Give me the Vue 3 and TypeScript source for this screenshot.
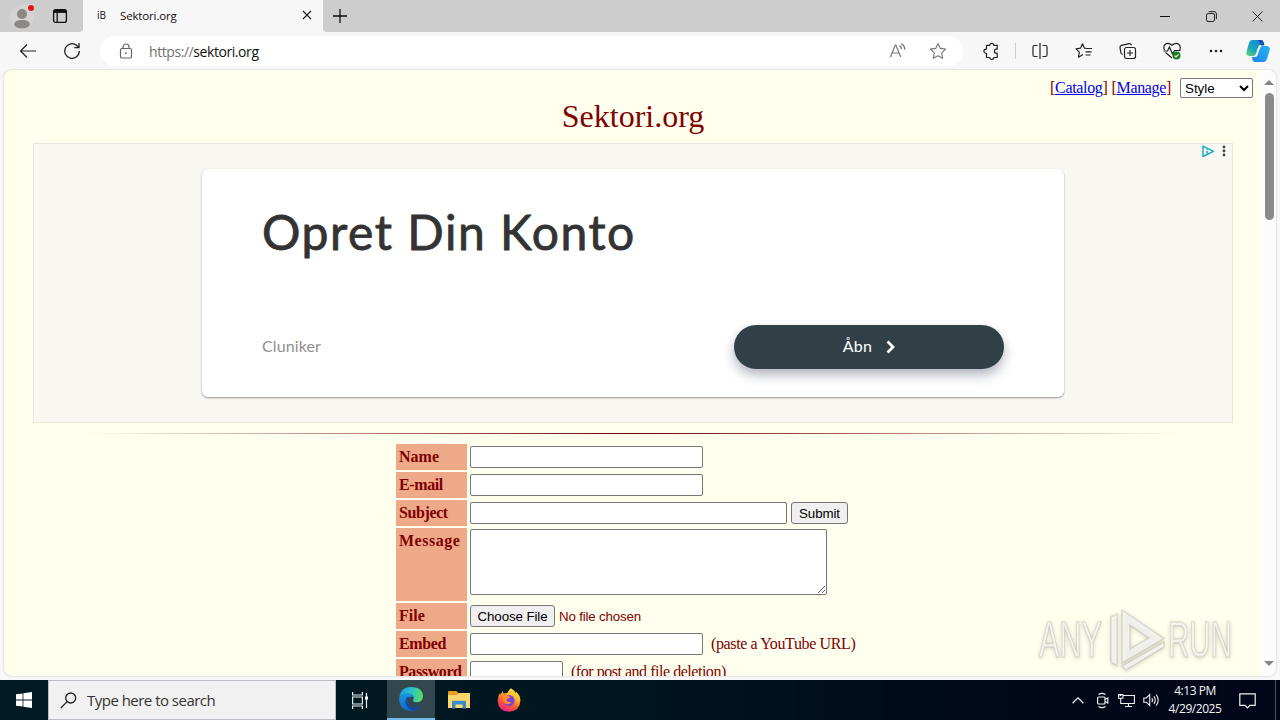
<script setup lang="ts">
import { ref } from 'vue'

interface Field {
  label: string
  kind: 'text' | 'subject' | 'message' | 'file' | 'password'
  hint?: string
}

const style = ref('Style')

const fields: Field[] = [
  { label: 'Name', kind: 'text' },
  { label: 'E-mail', kind: 'text' },
  { label: 'Subject', kind: 'subject' },
  { label: 'Message', kind: 'message' },
  { label: 'File', kind: 'file' },
  { label: 'Embed', kind: 'text', hint: '(paste a YouTube URL)' },
  { label: 'Password', kind: 'password', hint: '(for post and file deletion)' },
]
</script>

<template>
  <div class="desktop">
    <header class="titlebar">
      <div class="title-left">
        <svg class="avatar" width="24" height="28" viewBox="0 0 24 28">
          <circle cx="12" cy="15" r="12" fill="#d6d4d3" />
          <circle cx="12" cy="12" r="5" fill="#8b8886" />
          <path d="M4 23q0-5 8-5t8 5q-3 3.500-8 3.500t-8-3.500z" fill="#8b8886" />
          <circle cx="21" cy="6" r="4" fill="#d8d8d8" />
          <circle cx="21" cy="6" r="3" fill="#e0141c" />
        </svg>
        <svg class="workspace" width="16" height="16" viewBox="0 0 16 16" fill="none" stroke="#111" stroke-width="1.3">
          <rect x="1.6" y="1.6" width="12.8" height="12.8" rx="2" />
          <path d="M2 3.4h12" stroke-width="3" />
          <path d="M5.2 4v10.4" />
        </svg>
      </div>
      <div class="tab">
        <span class="favicon">iB</span>
        <span class="tab-title">Sektori.org</span>
        <svg width="10" height="10" viewBox="0 0 10 10" stroke="#222" stroke-width="1.2"><path d="M1 1l8 8M9 1L1 9" /></svg>
      </div>
      <div class="new-tab">
        <svg width="14" height="14" viewBox="0 0 14 14" stroke="#111" stroke-width="1.3"><path d="M7 0v14M0 7h14" /></svg>
      </div>
      <div class="win-controls">
        <span><svg width="10" height="10" viewBox="0 0 10 10"><path d="M0 5.5h10" stroke="#111" /></svg></span>
        <span>
          <svg width="11" height="11" viewBox="0 0 11 11" fill="none" stroke="#222">
            <rect x=".5" y="2.5" width="8" height="8" rx="1.6" />
            <path d="M2.8.6h5.2q2.4 0 2.4 2.4v5" />
          </svg>
        </span>
        <span><svg width="11" height="11" viewBox="0 0 11 11" stroke="#222"><path d="M.5.5l10 10M10.500.5l-10 10" /></svg></span>
      </div>
    </header>

    <nav class="toolbar">
      <div class="nav-buttons">
        <svg width="18" height="16" viewBox="0 0 18 16" fill="none" stroke="#222" stroke-width="1.2"><path d="M17 8H1.500M8 1.500L1.500 8 8 14.500" /></svg>
        <svg width="18" height="18" viewBox="0 0 18 18" fill="none" stroke="#222" stroke-width="1.3"><path d="M16.300 9A7.300 7.300 0 1 1 13.800 3.500L15.900 5.500M16 1v4.700h-4.600" /></svg>
      </div>
      <div class="address">
        <svg class="lock" width="14" height="16" viewBox="0 0 14 16" fill="none" stroke="#666" stroke-width="1.200">
          <rect x="1.500" y="5.500" width="11" height="9.500" rx="1.600" />
          <path d="M4 5.500V4a3 3 0 0 1 6 0v1.500" />
          <circle cx="7" cy="10.200" r=".9" fill="#666" stroke="none" />
        </svg>
        <span class="url"><i>https://</i>sektori.org</span>
        <svg class="read" width="18" height="16" viewBox="0 0 18 16" fill="none" stroke="#777" stroke-width="1.200">
          <path d="M1.500 14L6.300 2h.6l4.800 12M3.300 10h6.600" />
          <path d="M10.500 2.600q2 1 2 3.600M12.300.6q3.500 1.900 3.500 6.200" />
        </svg>
        <svg class="star" width="18" height="18" viewBox="0 0 18 18" fill="none" stroke="#777" stroke-width="1.100"><path d="M9 1.400l2.300 5 5.300.7-3.900 3.800.9 5.400L9 13.700l-4.600 2.600.9-5.400L1.400 7.100l5.300-.7z" stroke-linejoin="round" /></svg>
      </div>
      <div class="cell puzzle">
        <svg width="18" height="18" viewBox="0 0 18 18" fill="none" stroke="#222" stroke-width="1.200"><path d="M4.500 3.300h3.300a2 2 0 0 1 4 0h3.400v3.900h-.8a2 2 0 0 0 0 4h.8v4.300h-3.400a2 2 0 0 1-4 0H4.500v-4.200H4a2.100 2.100 0 0 1 0-4.200h.5z" stroke-linejoin="round" /></svg>
      </div>
      <div class="divider"></div>
      <div class="cell">
        <svg width="18" height="18" viewBox="0 0 18 18" fill="none" stroke="#222" stroke-width="1.200"><path d="M6.500 3.500h-3q-1.500 0-1.500 1.500v8q0 1.500 1.500 1.500h3M11.500 3.500h3q1.500 0 1.500 1.500v8q0 1.500-1.500 1.500h-3M9 1v16" /></svg>
      </div>
      <div class="cell">
        <svg width="18" height="18" viewBox="0 0 18 18" fill="none" stroke="#222" stroke-width="1.200"><path d="M12 6.500L9.500 6.200 7.500 1.800l-2 4.400-4.500.6 3.300 3.300-.8 5.100 4.500-2.600M10 6.500h7M10.500 9.800h6M10.500 13h5" stroke-linejoin="round" /></svg>
      </div>
      <div class="cell">
        <svg width="18" height="18" viewBox="0 0 18 18" fill="none" stroke="#222" stroke-width="1.200"><rect x="5.500" y="5.500" width="11" height="11" rx="2" /><path d="M11 8v6M8 11h6M3.600 12.500Q2 12 1.700 10L1 5.500Q.8 3.700 2.500 3.300l7.500-1.700q1.800-.3 2.500 1.700" /></svg>
      </div>
      <div class="cell">
        <svg width="20" height="20" viewBox="0 0 20 20" fill="none" stroke="#222" stroke-width="1.200">
          <path d="M2.500 9Q1 5.500 3 3.500q3.300-2.800 7 .8 3.700-3.600 7-.8 2 2.100.8 5.500M3.500 11.500L10 17M1.500 10h4l2-4 3 7 2-3.500h6" />
          <circle cx="14.500" cy="14.500" r="4" fill="#16801c" stroke="none" />
          <path d="M12.600 14.600l1.400 1.300 2.500-2.600" stroke="#fff" />
        </svg>
      </div>
      <div class="cell">
        <svg width="16" height="4" viewBox="0 0 16 4" fill="#222"><circle cx="3" cy="2" r="1.300" /><circle cx="8" cy="2" r="1.300" /><circle cx="13" cy="2" r="1.300" /></svg>
      </div>
      <div class="copilot">
        <svg width="26" height="24" viewBox="0 0 26 24">
          <defs>
            <linearGradient id="cpA" x1="0" y1="1" x2=".7" y2="0"><stop offset="0" stop-color="#65d568" /><stop offset=".45" stop-color="#18a8b8" /><stop offset="1" stop-color="#1688d8" /></linearGradient>
            <linearGradient id="cpB" x1="0" y1="1" x2="1" y2="0"><stop offset="0" stop-color="#2380f5" /><stop offset="1" stop-color="#22b6ee" /></linearGradient>
          </defs>
          <path d="M7 1h9q2 0 2.500 2l.8 3h-3.500q-2 0-2.700 2l-2.300 7q-.7 2-2.800 2H4.500Q.6 17 1.600 12.500L4 4q.8-3 3-3z" fill="url(#cpA)" />
          <path d="M19 23h-9q-2 0-2.500-2L7 18h3q2 0 2.700-2L15 9q.7-2 2.800-2h3.500q4.400 0 3.300 4.500L22 20q-.8 3-3 3z" fill="url(#cpB)" />
          <path d="M16 1q2 0 2.500 2l.8 3.500H16L13 1z" fill="#174fae" />
        </svg>
      </div>
    </nav>

    <div class="viewport">
      <main class="page">
        <div class="topnav">
          <span>[<a>Catalog</a>]</span><span>[<a>Manage</a>]</span>
          <select v-model="style"><option>Style</option></select>
        </div>
        <h1>Sektori.org</h1>

        <section class="ad">
          <div class="ad-marks">
            <svg width="13" height="13" viewBox="0 0 13 13" fill="none" stroke="#16adc6" stroke-width="1.500"><path d="M1 1.200v10.300l10.500-5.100z" stroke-linejoin="round" /><path d="M5 5.800v3M5 3.700v1.100" /></svg>
            <svg width="4" height="12" viewBox="0 0 4 12" fill="#444"><circle cx="2" cy="2" r="1.400" /><circle cx="2" cy="6" r="1.400" /><circle cx="2" cy="10" r="1.400" /></svg>
          </div>
          <div class="ad-card">
            <div class="ad-title">Opret Din Konto</div>
            <div class="ad-row">
              <span class="advertiser">Cluniker</span>
              <div class="cta">
                <span>Åbn</span>
                <svg width="9" height="14" viewBox="0 0 9 14" fill="none" stroke="#fff" stroke-width="2.800"><path d="M1.500 1.500L7 7l-5.500 5.500" /></svg>
              </div>
            </div>
          </div>
        </section>

        <div class="rule"></div>

        <form class="post-form" @submit.prevent>
          <template v-for="field in fields" :key="field.label">
            <label :class="field.label.toLowerCase()">{{ field.label }}</label>
            <div class="control">
              <textarea v-if="field.kind === 'message'"></textarea>
              <template v-else-if="field.kind === 'file'">
                <button type="button" class="choose">Choose File</button>
                <span class="no-file">No file chosen</span>
              </template>
              <input v-else type="text" :class="field.kind" />
              <button v-if="field.kind === 'subject'" type="submit" class="submit">Submit</button>
              <span v-if="field.hint" class="hint" :class="field.kind">{{ field.hint }}</span>
            </div>
          </template>
        </form>
      </main>
      <div class="scrollbar">
        <i class="up"></i>
        <i class="thumb"></i>
        <i class="down"></i>
      </div>
    </div>

    <footer class="taskbar">
      <div class="start">
        <svg width="16" height="16" viewBox="0 0 16 16" fill="#fff"><path d="M0 2.300l6.600-.9v6.100H0zM7.400 1.300L16 0v7.500H7.400zM0 8.400h6.600v6.200L0 13.700zM7.400 8.400H16V16l-8.600-1.200z" /></svg>
      </div>
      <div class="search">
        <svg width="17" height="17" viewBox="0 0 17 17" fill="none" stroke="#222" stroke-width="1.300"><circle cx="10.700" cy="6" r="5" /><path d="M7.200 9.600L.8 16" /></svg>
        <span>Type here to search</span>
      </div>
      <div class="task view">
        <svg width="18" height="17" viewBox="0 0 18 17" fill="none" stroke="#e8eeee" stroke-width="1.200"><path d="M1.600 0v3h9.800V0M1.600 17v-3h9.800v3M1.600 5h9.800v7H1.600zM15.500 1v15" /><path d="M14 4.500h3v3h-3z" fill="#fff" stroke="none" /></svg>
      </div>
      <div class="task active">
        <svg width="24" height="24" viewBox="0 0 24 24">
          <defs>
            <linearGradient id="eA" x1="0" y1=".4" x2="1" y2=".5"><stop offset="0" stop-color="#1b9ce2" /><stop offset=".5" stop-color="#29c2ce" /><stop offset="1" stop-color="#5be05b" /></linearGradient>
            <linearGradient id="eB" x1="0" y1="0" x2="0" y2="1"><stop offset="0" stop-color="#1899e0" /><stop offset="1" stop-color="#1664c0" /></linearGradient>
          </defs>
          <path d="M.2 11Q1.500 0 12.300 0 24 .5 24 9.500q-.3 5.700-6.500 5.800-4 0-3.400-2.200 1.400-2.300-.2-4.300-2.200-2.700-6.200-2Q2 7.500.2 11z" fill="url(#eA)" />
          <path d="M.1 12Q2 6 8.500 6.500q4.500.3 5.600 3.800-2-1.300-4 .3-2.400 2.400-.6 5.800 2.500 4.300 7.500 4 3-.3 4.900-1.700Q18.500 24 12.300 24 .5 23.800.1 12z" fill="url(#eB)" />
          <path d="M8.600 9.500q-4.300 5-.5 10 2.200 3.200 6.100 4.300 5-.7 7.700-5.100-5.300 2.800-10 .3-5.500-3.800-1.800-8.400z" fill="#124a98" />
        </svg>
      </div>
      <div class="task">
        <svg width="22" height="18" viewBox="0 0 22 18">
          <path d="M0 1q0-1 1-1h7.500l1.800 2H22v5H0z" fill="#e8a020" />
          <path d="M0 4h9l2-2h11v15H0z" fill="#ffd66b" />
          <path d="M4 17.500V11q0-1.200 1.200-1.200h11.600Q18 9.800 18 11v6.500h-3.500v-4h-7v4z" fill="#3a8cc8" />
        </svg>
      </div>
      <div class="task fox">
        <svg width="24" height="24" viewBox="0 0 24 24">
          <defs>
            <linearGradient id="fA" x1=".8" y1="0" x2=".3" y2="1"><stop offset="0" stop-color="#fff04a" /><stop offset=".35" stop-color="#ffb52a" /><stop offset=".65" stop-color="#ff5b30" /><stop offset="1" stop-color="#e6218a" /></linearGradient>
          </defs>
          <path d="M14 .3q3.500 2 4.500 5 .3-1 0-2 5 4 4.900 9.500Q23 23 12 23.700 1.300 23.300.7 13 .5 8 3.200 4.800L3.500 6.800 5.800 3l.7 2.600 3.700-.7q1.500-2.900 3.800-4.600z" fill="url(#fA)" />
          <circle cx="12" cy="12.500" r="5.600" fill="#7543d8" />
          <path d="M5.500 7.500q3-2 6 .2l2 1.800-3 1.200q-1.500.8-.5 2.500 2 1.500 4.500.3-1.800 4-6 2.300-3.500-2-3-8.300z" fill="#ff8a2b" />
        </svg>
      </div>
      <div class="tray">
        <svg width="12" height="7" viewBox="0 0 12 7" fill="none" stroke="#eee" stroke-width="1.300"><path d="M.6 6.300L6 .9l5.400 5.400" /></svg>
        <svg class="camera" width="14" height="17" viewBox="0 0 14 17" fill="none" stroke="#eee" stroke-width="1.200"><rect x="1.600" y="5" width="7.400" height="7" rx="1" /><path d="M9 7.500L11.800 6v5L9 9.500M2.500 2.500Q6 .2 9.500 2.500M2.500 14.500q3.500 2.300 7 0" /></svg>
        <svg class="network" width="17" height="15" viewBox="0 0 17 15" fill="none" stroke="#eee" stroke-width="1.100"><path d="M5.500 2.500h10.900v8H4.500M10.500 10.500V13M7 13.500h7M.6 1.500h4.300v3.800H.6zM2.700 5.300v5.200h2" /><path d="M1.500 2.500h2" /></svg>
        <svg class="volume" width="17" height="14" viewBox="0 0 17 14" fill="none" stroke="#eee" stroke-width="1.100"><path d="M.8 5v4.200h2.500l3.400 3.300V1.600L3.300 5zM8.800 5q1.300 2 0 4.100M11 3.200q2.400 3.900 0 7.700M13.200 1.500q4 5.600 0 11.100" /></svg>
        <div class="clock"><span>4:13 PM</span><span>4/29/2025</span></div>
        <svg class="notice" width="17" height="16" viewBox="0 0 17 16" fill="none" stroke="#f2f2f2" stroke-width="1.200"><path d="M.8.8h15.400v11.500h-5.400l-2.300 2.500-2.300-2.500H.8z" /></svg>
        <i class="peek"></i>
      </div>
    </footer>

    <svg class="watermark" width="216" height="70" viewBox="0 0 216 70">
      <g class="mark">
        <text x="5" y="52" textLength="63" lengthAdjust="spacingAndGlyphs">ANY</text>
        <text x="134" y="52" textLength="64" lengthAdjust="spacingAndGlyphs">RUN</text>
        <path d="M88 5v53l42-24.500zM96 20v24l19-11z" fill-rule="evenodd" />
        <path d="M77 12l6-3v52l-6-4z" />
        <path d="M88 61l42-24v5L92 65z" />
      </g>
    </svg>
  </div>
</template>

<style>
html,
body {
  margin: 0;
  overflow: hidden;
}
</style>

<style scoped>
* {
  box-sizing: border-box;
}
svg {
  display: block;
  flex: none;
}
.desktop {
  position: relative;
  width: 1280px;
  height: 720px;
  overflow: hidden;
  display: flex;
  flex-direction: column;
  background: #f7f7f7;
  font-family: 'Open Sans', 'Noto Sans', sans-serif;
}
.titlebar {
  height: 32px;
  display: flex;
  background: #f7f7f7;
}
.title-left {
  width: 83px;
  display: flex;
  align-items: center;
  padding-left: 10px;
  gap: 18px;
  background: #cdcdcd;
  border-bottom-right-radius: 4px;
}
.tab {
  width: 240px;
  display: flex;
  align-items: center;
  padding: 0 11px 2px 14px;
  font-size: 11.5px;
  color: #111;
}
.favicon {
  width: 23px;
  font-size: 10px;
}
.tab-title {
  flex: 1;
  letter-spacing: -0.15px;
}
.new-tab {
  flex: 1;
  padding: 9px 0 0 10px;
  background: #cdcdcd;
  border-bottom-left-radius: 4px;
}
.win-controls {
  display: flex;
  background: #cdcdcd;
}
.win-controls span {
  width: 46px;
  display: grid;
  place-items: center;
}
.toolbar {
  height: 38px;
  display: flex;
  align-items: center;
}
.nav-buttons {
  width: 100px;
  display: flex;
  align-items: center;
  padding-left: 19px;
  gap: 26px;
}
.address {
  width: 863px;
  height: 30px;
  margin-right: 6px;
  border-radius: 15px;
  background: #fff;
  display: flex;
  align-items: center;
  padding: 0 16px 0 19px;
}
.url {
  flex: 1;
  padding-left: 16px;
  font-size: 14px;
  letter-spacing: -0.43px;
  color: #111;
}
.url i {
  font-style: normal;
  color: #707070;
}
.read {
  margin-right: 22px;
}
.cell {
  width: 44px;
  display: grid;
  place-items: center;
}
.divider {
  width: 1px;
  height: 16px;
  margin: 0 2px;
  background: #ccc;
}
.copilot {
  width: 40px;
  display: grid;
  place-items: center;
}
.viewport {
  width: 1272px;
  height: 606px;
  margin: 0 4px 4px;
  display: flex;
  overflow: hidden;
  border-radius: 8px;
  background: #ffffee;
  box-shadow: 0 0 2px #bbb;
}
.page {
  width: 1258px;
  color: #800000;
  font-family: 'Liberation Serif', 'Times New Roman', serif;
  font-size: 16px;
}
.topnav {
  height: 29px;
  padding: 8px 9px 0 0;
  display: flex;
  justify-content: flex-end;
  align-items: flex-start;
  gap: 4px;
  line-height: 20px;
  letter-spacing: -0.34px;
}
.topnav a {
  color: #0000ee;
  text-decoration: underline;
}
.topnav select {
  width: 73px;
  height: 20px;
  margin-left: 5px;
  border: 1px solid #767676;
  border-radius: 2px;
  padding: 0;
  background: #fff;
  color: #000;
  font-family: 'Liberation Sans', Arial, sans-serif;
  font-size: 13.33px;
  letter-spacing: 0;
}
h1 {
  margin: 0;
  height: 44px;
  text-align: center;
  font-size: 32px;
  line-height: 34px;
  font-weight: 400;
}
.ad {
  position: relative;
  width: 1200px;
  height: 280px;
  margin: 0 auto;
  padding-top: 25px;
  border: 1px solid #e8e7de;
  background: #f9f7f2;
}
.ad-marks {
  position: absolute;
  top: 1px;
  right: 6px;
  display: flex;
  gap: 7px;
}
.ad-card {
  width: 862px;
  height: 228px;
  margin: 0 auto;
  padding: 34px 60px 0;
  border-radius: 6px;
  background: #fff;
  box-shadow: 0 1px 2px rgba(0, 0, 0, 0.4);
}
.ad-title {
  height: 122px;
  font-family: Lato, sans-serif;
  font-size: 48px;
  line-height: 58px;
  letter-spacing: 1.55px;
  color: #333;
  -webkit-text-stroke: 0.8px #333;
}
.ad-row {
  display: flex;
  justify-content: space-between;
  align-items: center;
  font-family: Lato, sans-serif;
  font-size: 16px;
}
.advertiser {
  padding-bottom: 3px;
  letter-spacing: 0.1px;
  color: #909090;
}
.cta {
  width: 270px;
  height: 44px;
  border-radius: 22px;
  display: flex;
  align-items: center;
  justify-content: center;
  gap: 14px;
  background: #314046;
  color: #fff;
  box-shadow: 0 6px 12px rgba(60, 70, 100, 0.4);
}
.cta span {
  padding-bottom: 3px;
  letter-spacing: 0.3px;
}
.rule {
  width: 1100px;
  height: 1px;
  margin: 10px auto 10px;
  background: linear-gradient(to right, rgba(112, 0, 0, 0), #700000, rgba(112, 0, 0, 0));
}
.post-form {
  margin-left: 392px;
  display: grid;
  grid-template-columns: 71px 1fr;
  gap: 2px;
}
label {
  height: 26px;
  padding: 0 3px;
  line-height: 26px;
  font-weight: 700;
  background: #eeaa88;
}
label.message {
  height: 73px;
  letter-spacing: 0.5px;
}
label.e-mail,
label.subject,
label.embed,
label.password {
  letter-spacing: -0.4px;
}
.control {
  display: flex;
  align-items: flex-start;
  padding: 2px 1px 0;
}
input,
textarea {
  flex: none;
  display: block;
  margin: 0;
  width: 233px;
  height: 22px;
  border: 1px solid #767676;
  border-radius: 2px;
  background: #fff;
}
textarea {
  width: 357px;
  height: 66px;
  margin-top: -1px;
}
input.subject {
  width: 317px;
}
input.password {
  width: 93px;
}
button {
  height: 22px;
  padding: 0;
  border: 1px solid #767676;
  border-radius: 3px;
  background: #efefef;
  color: #000;
  font-family: 'Liberation Sans', Arial, sans-serif;
  font-size: 13.33px;
  letter-spacing: -0.1px;
}
.submit {
  width: 57px;
  margin-left: 4px;
}
.choose {
  width: 85px;
}
.no-file {
  margin-left: 4px;
  font-family: 'Liberation Sans', Arial, sans-serif;
  font-size: 13.33px;
  line-height: 23px;
  letter-spacing: -0.18px;
}
.hint {
  margin-left: 8px;
  line-height: 22px;
  letter-spacing: -0.38px;
}
.hint.password {
  letter-spacing: -0.47px;
}
.scrollbar {
  width: 14px;
  display: flex;
  flex-direction: column;
  align-items: center;
  padding: 10px 0 10px;
  background: #fcfcfc;
}
.up,
.down {
  border: 5px solid transparent;
  border-top: 0;
  border-bottom: 5px solid #858585;
}
.thumb {
  width: 9px;
  height: 127px;
  margin: 8px 0 auto;
  border-radius: 5px;
  background: #8b8b8b;
}
.down {
  border-bottom: 0;
  border-top: 5px solid #858585;
}
.taskbar {
  height: 40px;
  display: flex;
  background: linear-gradient(to right, #001922 0, #001721 45%, #000a18 75%, #020619);
}
.start {
  width: 48px;
  display: grid;
  place-items: center;
}
.search {
  width: 288px;
  display: flex;
  align-items: center;
  gap: 10px;
  padding-left: 11px;
  border: 1px solid #b9bcc0;
  background: #f1f1f1;
  color: #333;
  font-size: 15px;
  letter-spacing: -0.52px;
}
.task {
  width: 48px;
  display: grid;
  place-items: center;
}
.view {
  margin-right: 3px;
}
.active {
  background: #33474f;
  border-bottom: 2px solid #76b9ed;
}
.fox {
  margin-left: 2px;
}
.tray {
  margin-left: auto;
  height: 40px;
  display: flex;
  align-items: center;
}
.camera {
  margin-left: 12px;
}
.network {
  margin-left: 8px;
}
.volume {
  margin: 0 8px 0 8px;
}
.clock {
  width: 54px;
  display: flex;
  flex-direction: column;
  align-items: center;
  color: #f4f4f4;
  font-size: 12px;
  line-height: 18px;
  letter-spacing: -0.45px;
  white-space: nowrap;
}
.notice {
  margin: 1px 19px 0 17px;
}
.peek {
  width: 5px;
  height: 40px;
  border-left: 1px solid #4a5060;
}
.watermark {
  position: absolute;
  left: 1034px;
  top: 605px;
  overflow: visible;
}
.mark {
  fill: rgba(255, 255, 255, 0.6);
  stroke: rgba(165, 165, 150, 0.32);
  stroke-width: 1.6;
  font-family: 'Liberation Sans', Arial, sans-serif;
  font-size: 50px;
  filter: drop-shadow(0 1px 2px rgba(90, 90, 80, 0.4));
}
</style>
